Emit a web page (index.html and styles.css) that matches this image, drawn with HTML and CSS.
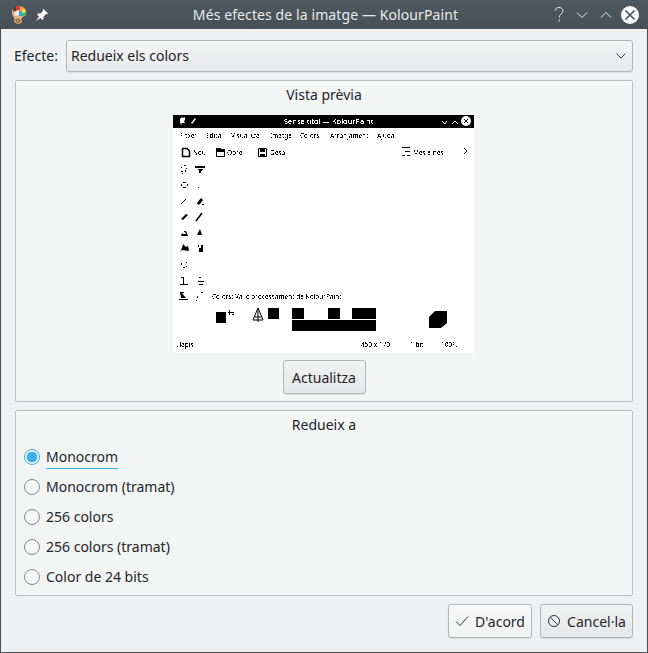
FILE: index.html
```html
<!DOCTYPE html>
<html>
<head>
<meta charset="utf-8">
<title>Més efectes de la imatge — KolourPaint</title>
<link rel="stylesheet" href="styles.css">
</head>
<body>
<div class="window">
  <header class="titlebar">
    <div class="tb-left">
      <svg class="tb-app" width="14" height="18" viewBox="0 0 14 18">
        <path d="M6 0C2 0 0 3 0 6.500 0 9 1 10.500 2 11.500 3 12.500 1.500 14 2.500 16 3.500 18 8 18.500 9.500 16.500 10.500 15 9 14 9.500 12.500 10 11 14 10 14 6 14 2.500 10 0 6 0z" fill="#e8b184"/>
        <path d="M1 1.500 4 0 5 4 1.500 6z" fill="#5d3a36"/>
        <path d="M4 0 8 0 8 4 5 4z" fill="#e3344a"/>
        <path d="M8 0 12 2 10 5 8 4z" fill="#f39c2c"/>
        <path d="M12 2 14 6 10 7 10 5z" fill="#f2e23a"/>
        <path d="M10 7 14 6 13.500 10 9.500 10z" fill="#3fc45f"/>
        <path d="M7 5 10 5 10 10 7 10z" fill="#3d9fe9"/>
        <path d="M2 6 7 5 7 9 3 10z" fill="#f6ecdc"/>
        <path d="M3.500 13.500C5 12 8 12.500 8.500 14.500 8.800 16 7 17 5.500 16.800 4 16.500 3 15 3.500 13.500z" fill="#8a5c36"/>
        <circle cx="6" cy="14.800" r="1.100" fill="#c9a27e"/>
      </svg>
      <svg class="tb-pin" width="12" height="12" viewBox="0 0 12 12">
        <path d="M7.500 0 12 4.500 11 5.300 10 5 7.500 7.500 7.500 10 6.500 11 1 5.500 2 4.500 4.500 4.500 7 2 6.700 1z" fill="#fcfcfc"/>
        <path d="M0 12 3 7.500 4.500 9z" fill="#fcfcfc"/>
      </svg>
    </div>
    <div class="tb-title">Més efectes de la imatge — KolourPaint</div>
    <div class="tb-right">
      <svg width="10" height="15" viewBox="0 0 10 15"><path d="M1 4C1 1.800 3 .5 5 .5 7.300 .5 9 2 9 4 9 6.800 5.200 6.800 5.200 10.500M5.200 12.500V14.500" class="tb-stroke"/></svg>
      <svg width="12" height="8" viewBox="0 0 12 8"><path d="M1 1.500 6 6.500 11 1.500" class="tb-stroke"/></svg>
      <svg class="tb-up" width="12" height="8" viewBox="0 0 12 8"><path d="M1 6.500 6 1.500 11 6.500" class="tb-stroke"/></svg>
      <svg class="tb-close" width="18" height="18" viewBox="0 0 18 18"><circle cx="9" cy="9" r="9" fill="#fcfcfc"/><path d="M4.500 4.500 13.500 13.500M13.500 4.500 4.500 13.500" class="tb-x"/></svg>
    </div>
  </header>

  <main class="content">
    <div class="effect-row">
      <label class="effect-label">Efecte:</label>
      <div class="combo">
        <span>Redueix els colors</span>
        <svg width="10" height="6" viewBox="0 0 10 6"><path d="M.5.500 5 5 9.500.500" class="dark-stroke"/></svg>
      </div>
    </div>

    <section class="group preview-group">
      <div class="group-title">Vista prèvia</div>
      <svg class="preview" width="301" height="238" viewBox="0 1 301 238">
        <defs>
          <filter id="mono" x="0" y="0" width="100%" height="100%">
            <feComponentTransfer><feFuncA type="discrete" tableValues="0 0 1 1"/></feComponentTransfer>
          </filter>
        </defs>
        <rect width="301" height="239" fill="#fff"/>
        <rect width="301" height="14" fill="#000"/>
        <g filter="url(#mono)">
          <text x="111" y="10" class="pv pv-w">Sense títol — KolourPaint</text>
          <text x="7" y="24" class="pv">Fitxer</text>
          <text x="33" y="24" class="pv">Edita</text>
          <text x="58" y="24" class="pv">Visualitza</text>
          <text x="97" y="24" class="pv">Imatge</text>
          <text x="127" y="24" class="pv">Colors</text>
          <text x="157" y="24" class="pv">Arranjament</text>
          <text x="204" y="24" class="pv">Ajuda</text>
          <text x="20" y="41" class="pv">Nou</text>
          <text x="54" y="41" class="pv">Obre</text>
          <text x="97" y="41" class="pv">Desa</text>
          <text x="240" y="41" class="pv">Més eines</text>
          <text x="39" y="185" class="pv">Colors: Vàlid processament de KolourPaint</text>
          <text x="3" y="233" class="pv">Llapis</text>
          <text x="188" y="233" class="pv">450 x 170</text>
          <text x="237" y="233" class="pv">1 bit</text>
          <text x="268" y="233" class="pv">100%</text>
        </g>
        <path d="M7 5 9 3 10 4 12 3 12 6 11 7 12 9 9 9 8 11 7 8z" fill="#fff"/>
        <path d="M18 9 22 4 23 5 19 10z" fill="#fff"/>
        <path d="M269 7 272 10 274 7M279 10 282 7 285 10" class="pv-line-w"/>
        <circle cx="293" cy="7" r="5" fill="#fff"/>
        <path d="M291 5 295 9M295 5 291 9" class="pv-line"/>
        <path d="M9.500 34.500H14L16.500 37V42.500H9.500z" class="pv-bold"/>
        <path d="M43.500 35.500H51.500V42.500H43.500z" class="pv-line"/>
        <path d="M43 34H48V36H52V38H43z"/>
        <path d="M85.500 34.500H93.500V42.500H85.500z" class="pv-line"/>
        <path d="M87 35H92V38H87zM87 40H92V42H87z"/>
        <path d="M229 33H237V34H229zM232 37H237V38H232zM229 41H232V42H229zM234 41H237V42H234z"/>
        <path d="M291 34 294 37 291 40" class="pv-line"/>
        <!-- tool palette -->
        <path d="M11 51h2v1h-2zM8 53h1v1H8zM13 54h1v1h-1zM8 57h2v1H8zM12 56h1v2h-1zM9 59h1v1H9z"/>
        <path d="M22 52H32V54H22zM25 55H30V56H25zM26 56H29V57H26zM26 57H28V59H26z"/>
        <path d="M10 68h3v1h-3zM8 70h1v2H8zM14 70h1v2h-1zM10 73h3v1h-3z"/>
        <path d="M25 73h1v1h-1z"/>
        <path d="M8 90 13 85" class="pv-line"/>
        <path d="M24 89 28 84 30 86 27 90 25 91zM29 90h2v1h-2z"/>
        <path d="M8 105 13 100 15 101 10 106z"/>
        <path d="M23 107 29 99" class="pv-bold"/>
        <path d="M11 117H13L15 122H8L9 119 10 120H13L12 118H11z"/>
        <path d="M27 115 29 121H24z"/>
        <path d="M10 130 13 133 15 132 16 137 9 136 7 138 9 134z"/>
        <path d="M25 131H26V133H25zM28 131H30V138H26V134H28z"/>
        <path d="M8 149h1v2H8zM13 148h1v1h-1zM13 152h1v1h-1zM10 153h2v1h-2z"/>
        <path d="M8 163H11V164H8zM10 164H11V170H10zM7 170H15V171H7zM26 163H28V164H26zM25 167H31V168H25zM26 170H30V171H26z"/>
        <path d="M7 178H11V179H9L13 184H8zM6 185H15V186H6zM23 186h1v1h-1zM24 182h1v2h-1zM28 178h2v1h-2z"/>
        <!-- colour blocks -->
        <rect x="43" y="198" width="10" height="11"/>
        <path d="M55 198H61V199H55zM56 196H57V201H56zM59 200H61V201H59z"/>
        <path d="M85 194 80 206H90z" class="pv-line"/>
        <path d="M85 194V208M82 203H88"  class="pv-line"/>
        <rect x="95" y="194" width="11" height="11"/>
        <rect x="119" y="194" width="12" height="11"/>
        <rect x="119" y="206" width="84" height="11"/>
        <rect x="155" y="194" width="12" height="11"/>
        <rect x="179" y="194" width="24" height="11"/>
        <path d="M262 197H274V209L268 214H256V203z"/>
      </svg>
      <button class="btn update-btn">Actualitza</button>
    </section>

    <section class="group reduce-group">
      <div class="group-title">Redueix a</div>
      <ul class="radios">
        <li class="radio-row"><span class="radio radio-on"></span><span class="radio-focus">Monocrom</span></li>
        <li class="radio-row"><span class="radio"></span><span class="radio-text">Monocrom (tramat)</span></li>
        <li class="radio-row"><span class="radio"></span><span class="radio-text">256 colors</span></li>
        <li class="radio-row"><span class="radio"></span><span class="radio-text">256 colors (tramat)</span></li>
        <li class="radio-row"><span class="radio"></span><span class="radio-text">Color de 24 bits</span></li>
      </ul>
    </section>

    <footer class="actions">
      <button class="btn btn-light action-ok">
        <svg width="14" height="12" viewBox="0 0 14 12"><path d="M1 6.500 5 10.500 13 1.500" class="dark-stroke"/></svg>
        D'acord
      </button>
      <button class="btn action-cancel">
        <svg width="14" height="14" viewBox="0 0 14 14"><circle cx="7" cy="7" r="5.500" class="dark-stroke"/><path d="M3 3 11 11" class="dark-stroke"/></svg>
        Cancel·la
      </button>
    </footer>
  </main>
</div>
</body>
</html>
```

FILE: styles.css
```css
* { box-sizing: border-box; }

html, body {
  margin: 0;
  padding: 0;
}

body {
  width: 648px;
  height: 653px;
  overflow: hidden;
  font-family: "Noto Sans", sans-serif;
  font-size: 14px;
  color: #232629;
  background: #eff0f1;
}

.window {
  width: 648px;
  height: 653px;
  display: flex;
  flex-direction: column;
  border: 1px solid #475057;
  border-top: 0;
}

.titlebar {
  height: 29px;
  margin: 0 -1px;
  flex: none;
  display: grid;
  grid-template-columns: 1fr auto 1fr;
  align-items: center;
  background: linear-gradient(#4f5961, #475057);
  color: #fcfcfc;
  padding: 0 9px 0 12px;
}

.tb-left {
  display: flex;
  align-items: center;
  gap: 10px;
}

.tb-title {
  font-size: 14px;
  letter-spacing: .1px;
  color: #e8eaeb;
}

.tb-right {
  display: flex;
  align-items: center;
  justify-content: flex-end;
  gap: 12px;
}

.tb-close {
  margin-left: -3px;
}

.tb-stroke {
  fill: none;
  stroke: #e8eaeb;
  stroke-width: 1;
}

.tb-x {
  fill: none;
  stroke: #475057;
  stroke-width: 1.6;
}

.dark-stroke {
  fill: none;
  stroke: #31363b;
  stroke-width: 1;
}

.content {
  flex: 1;
  display: flex;
  flex-direction: column;
  padding: 11px 14px 14px;
  min-height: 0;
}

.effect-row {
  display: flex;
  align-items: center;
  gap: 7px;
  height: 32px;
}

.effect-label {
  margin-left: -1px;
  margin-right: 1px;
  padding-bottom: 2px;
}

.combo {
  flex: 1;
  height: 32px;
  display: flex;
  align-items: center;
  justify-content: space-between;
  padding: 0 6px 2px 4px;
  border: 1px solid #b3b5b6;
  border-radius: 3px;
  background: linear-gradient(#f3f4f4, #e8e9ea);
  box-shadow: 0 1px 1px rgba(0,0,0,.08);
}

.combo svg {
  margin-top: 2px;
}

.group {
  border: 1px solid #bcbebf;
  border-radius: 2px;
  background: #f3f4f4;
  display: flex;
  flex-direction: column;
  align-items: center;
}

.preview-group {
  margin-top: 8px;
  height: 322px;
}

.group-title {
  height: 28px;
  line-height: 28px;
}

.preview {
  display: block;
  margin-top: 6px;
  margin-right: 1px;
  flex: none;
}

.pv {
  font-family: "Noto Sans", sans-serif;
  font-size: 6.500px;
  fill: #000;
}

.pv-w { fill: #fff; font-size: 7.500px; }

.pv-line {
  fill: none;
  stroke: #000;
  stroke-width: 1;
}

.pv-bold {
  fill: none;
  stroke: #000;
  stroke-width: 1.500;
}

.pv-line-w {
  fill: none;
  stroke: #fff;
  stroke-width: 1;
}

.btn {
  font: inherit;
  color: inherit;
  height: 34px;
  display: inline-flex;
  align-items: center;
  justify-content: center;
  gap: 6px;
  border: 1px solid #b3b5b6;
  border-radius: 3px;
  background: linear-gradient(#f0f1f1, #e6e7e8);
  box-shadow: 0 1px 1px rgba(0,0,0,.1);
  padding: 0;
}

.btn-light {
  background: linear-gradient(#f8f8f8, #f0f1f1);
}

.update-btn {
  width: 83px;
  margin-top: 7px;
}

.reduce-group {
  margin-top: 8px;
  height: 186px;
  align-items: stretch;
}

.reduce-group .group-title {
  text-align: center;
}

.radios {
  list-style: none;
  margin: 7px 0 0;
  padding: 0 8px;
  display: flex;
  flex-direction: column;
  gap: 8px;
}

.radio-row {
  display: flex;
  align-items: center;
  gap: 6px;
  height: 22px;
}

.radio {
  width: 16px;
  height: 16px;
  border-radius: 50%;
  border: 1px solid #85888a;
  background: #f6f7f7;
  flex: none;
}

.radio-on {
  border-color: #3daee9;
  background: radial-gradient(circle, #3daee9 0 5px, #eef7fc 5.600px);
}

.radio-text {
  padding-bottom: 2px;
}

.radio-focus {
  align-self: flex-start;
  height: 23px;
  line-height: 22px;
  border-bottom: 1px solid #3daee9;
}

.actions {
  margin-top: 8px;
  display: flex;
  justify-content: flex-end;
  gap: 8px;
}

.action-ok { width: 84px; }
.action-cancel { width: 93px; }
```
